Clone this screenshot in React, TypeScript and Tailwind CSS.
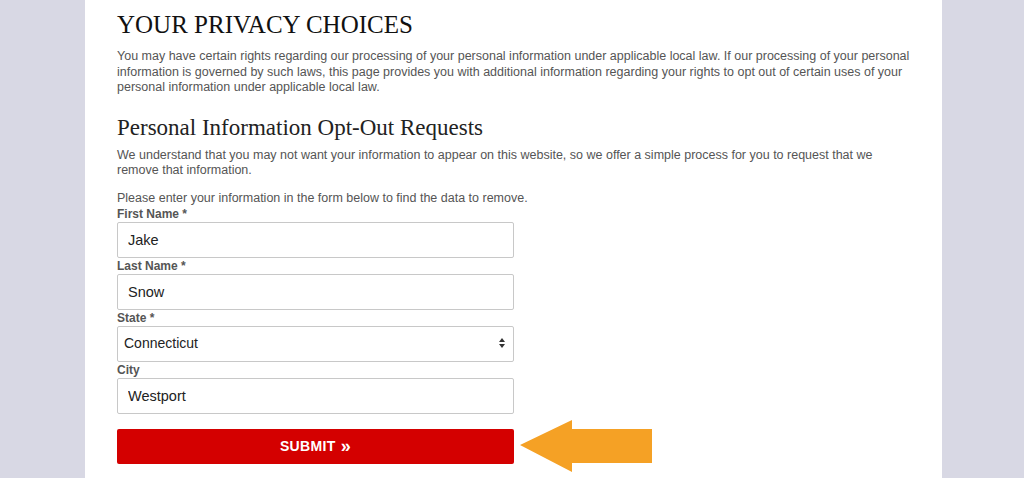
import React from 'react';

const labelCls = 'block text-[12px] font-bold leading-4 text-[#555]';
const inputCls =
  'block w-[397px] h-9 rounded-[2px] border border-[#c8c8c8] bg-white px-[10px] text-[14.5px] text-[#222] outline-none';

export default function App() {
  return (
    <div
      className="relative h-[478px] overflow-hidden bg-[#d8d8e4]"
      style={{ fontFamily: '"Liberation Sans", Arial, sans-serif' }}
    >
      <div className="ml-[85px] h-full w-[857px] bg-white px-8 pt-[7px]">
        <h1 className="text-[25px] leading-9 text-[#111]" style={{ fontFamily: '"Liberation Serif", serif' }}>
          YOUR PRIVACY CHOICES
        </h1>
        <p className="mt-[6px] text-[12.5px] leading-[15.5px] text-[#555]">
          You may have certain rights regarding our processing of your personal information under applicable local law. If our processing of your personal
          information is governed by such laws, this page provides you with additional information regarding your rights to opt out of certain uses of your
          personal information under applicable local law.
        </p>
        <h2 className="mt-[18px] text-[23px] leading-7 text-[#222]" style={{ fontFamily: '"Liberation Serif", serif' }}>
          Personal Information Opt-Out Requests
        </h2>
        <p className="mt-[6px] text-[12.5px] leading-[15.5px] text-[#555]">
          We understand that you may not want your information to appear on this website, so we offer a simple process for you to request that we
          <br />
          remove that information.
        </p>
        <p className="mt-[11px] text-[12.5px] leading-4 text-[#555]">
          Please enter your information in the form below to find the data to remove.
        </p>
        <form onSubmit={(e) => e.preventDefault()}>
          <label className={labelCls}>First Name *</label>
          <input className={inputCls} defaultValue="Jake" />
          <label className={labelCls}>Last Name *</label>
          <input className={inputCls} defaultValue="Snow" />
          <label className={labelCls}>State *</label>
          <div className="relative w-[397px]">
            <select className={`${inputCls} appearance-none !px-[6px] !text-[14px]`} defaultValue="CT">
              <option value="CT">Connecticut</option>
            </select>
            <span className="pointer-events-none absolute right-[9px] top-[12px] flex flex-col items-center leading-none text-[#333]">
              <svg width="6" height="4" viewBox="0 0 6 4"><path d="M0 4 L3 0 L6 4Z" fill="currentColor" /></svg>
              <svg width="6" height="4" viewBox="0 0 6 4" className="mt-[2px]"><path d="M0 0 L3 4 L6 0Z" fill="currentColor" /></svg>
            </span>
          </div>
          <label className={labelCls}>City</label>
          <input className={inputCls} defaultValue="Westport" />
          <button
            type="submit"
            className="mt-[15px] flex h-[35px] w-[397px] items-center justify-center rounded-[2px] bg-[#d40000] text-[14px] font-bold tracking-wide text-white"
          >
            SUBMIT <span className="ml-[5px] text-[18px] leading-none">»</span>
          </button>
        </form>
      </div>
      <svg className="absolute left-[518px] top-[418px]" width="136" height="56" viewBox="518 418 136 56">
        <polygon points="520,445 572,420 572,429 652,429 652,463 572,463 572,472" fill="#f5a125" />
      </svg>
    </div>
  );
}
